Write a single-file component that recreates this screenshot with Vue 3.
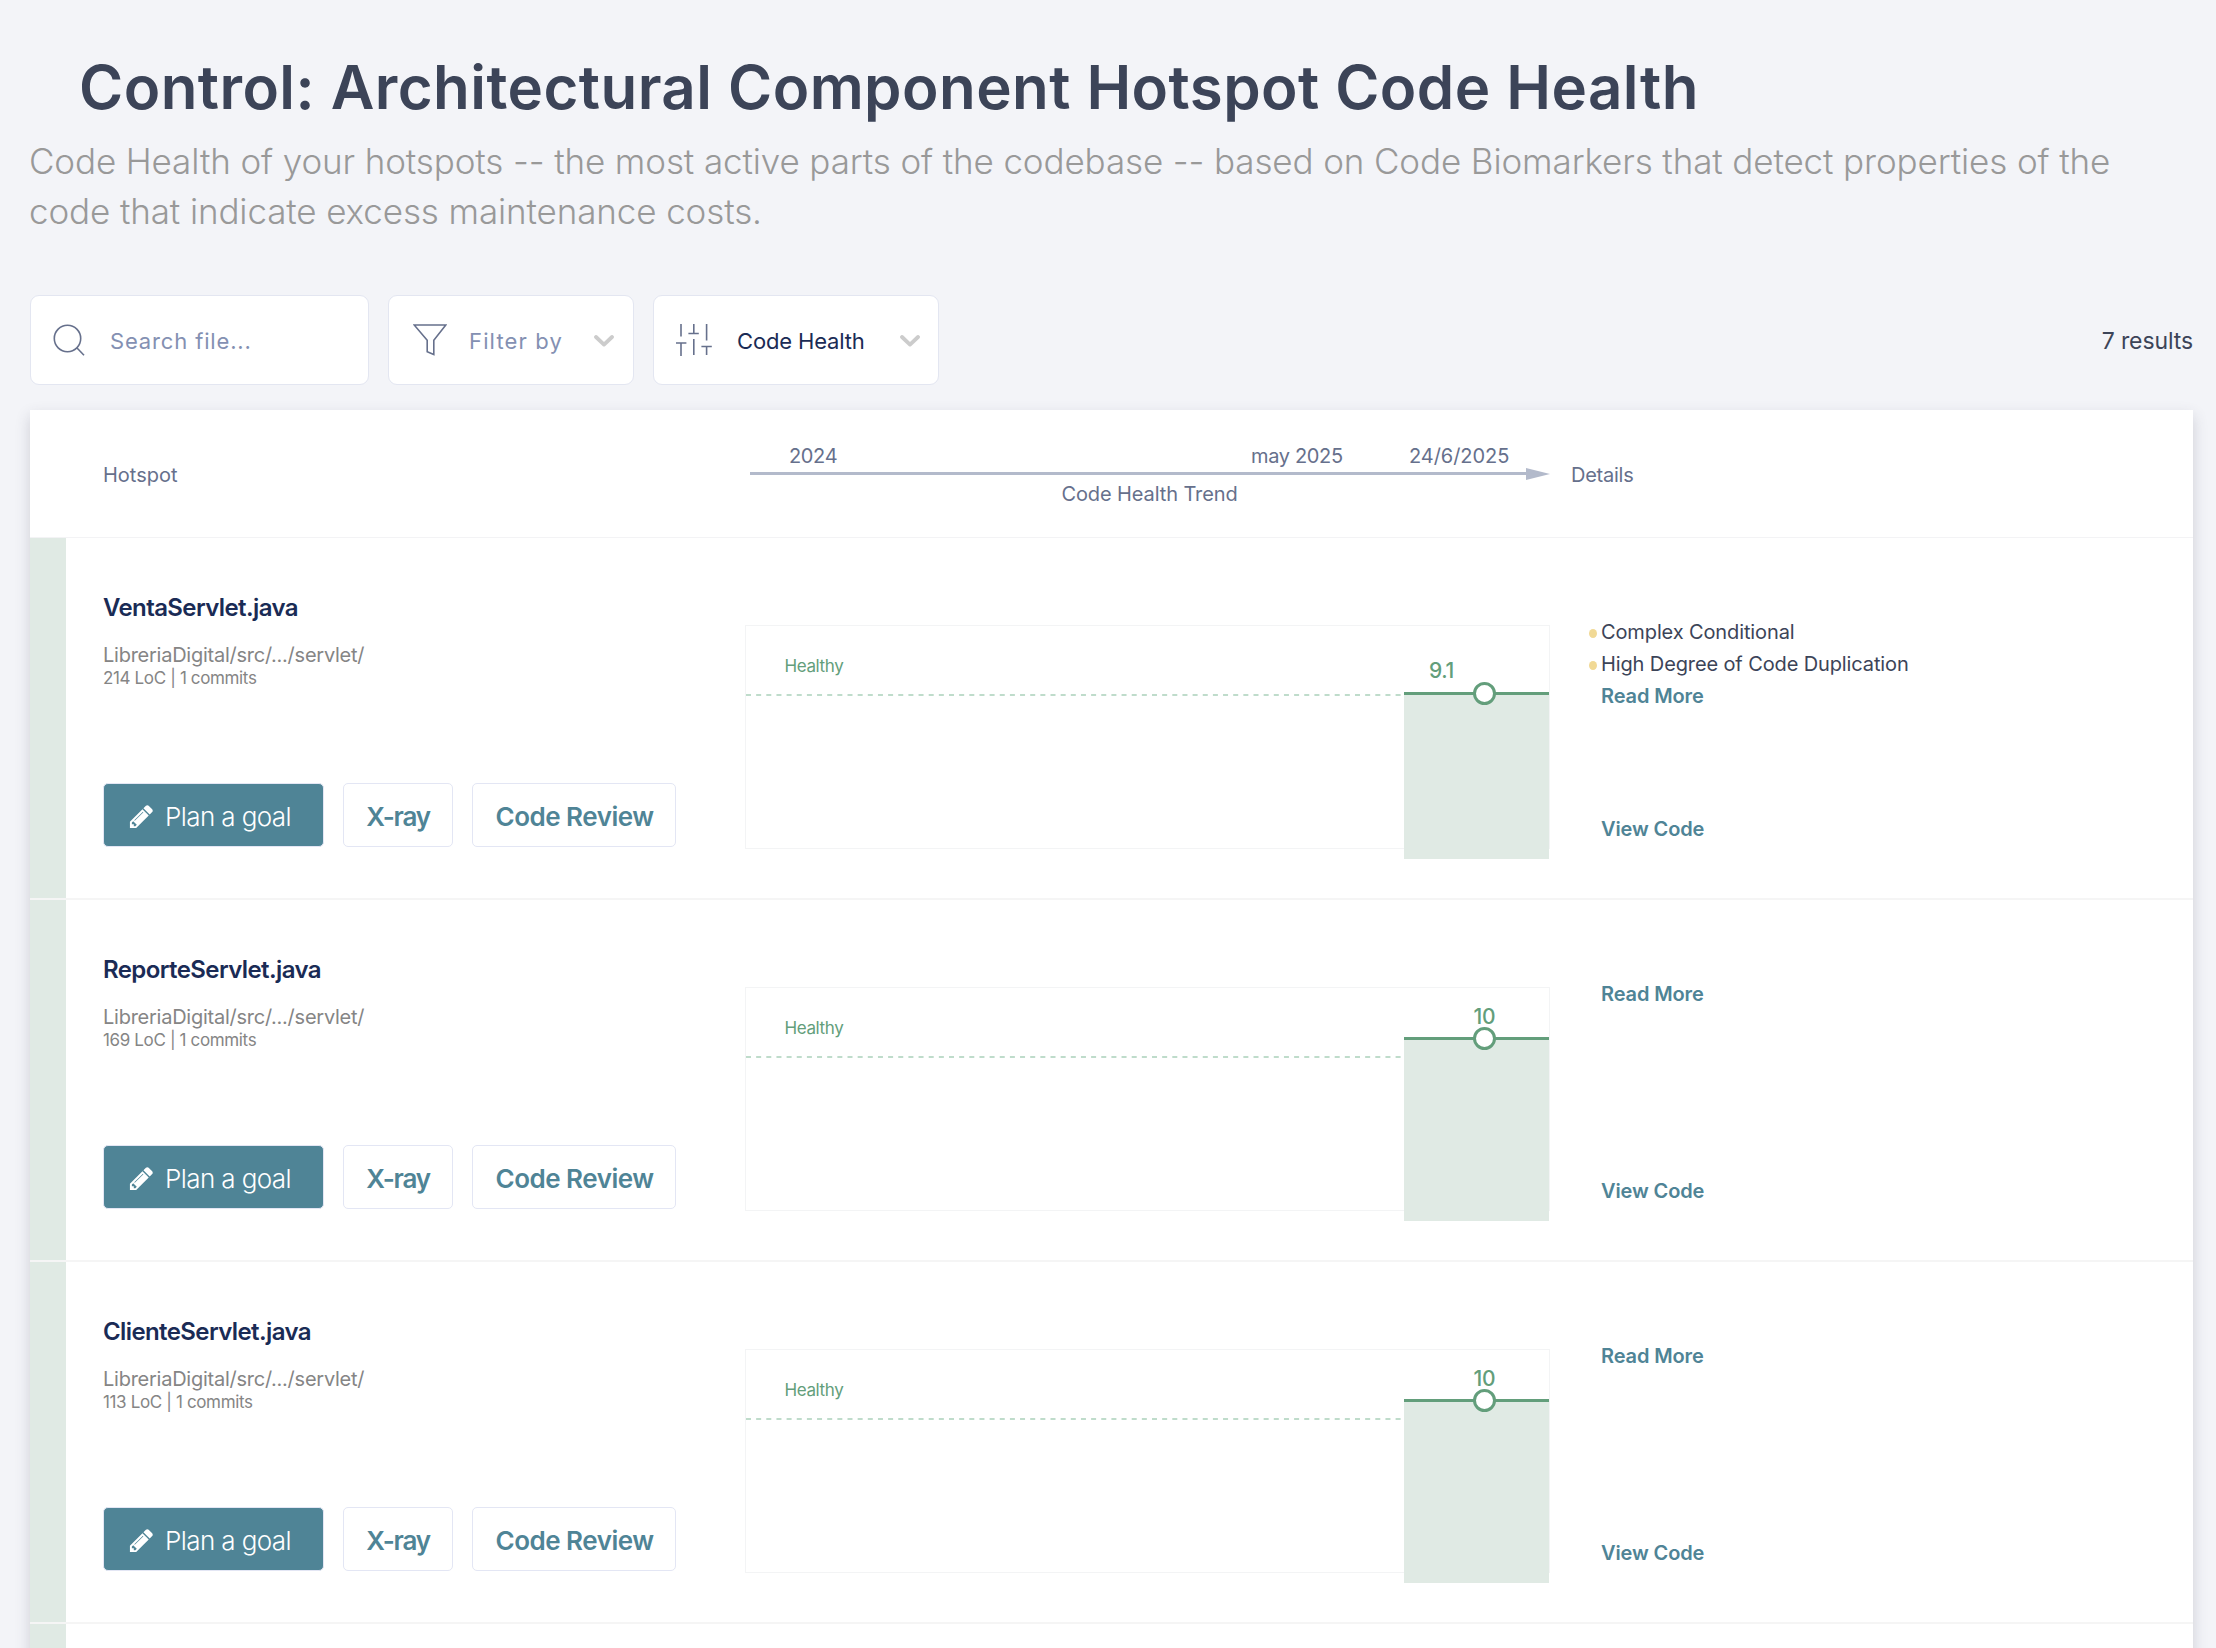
<script setup>
const files = [
  { name: 'VentaServlet.java', loc: 214, commits: 1, score: '9.1', lineY: 68.5, labelX: 684, labelY: 53, markers: ['Complex Conditional', 'High Degree of Code Duplication'] },
  { name: 'ReporteServlet.java', loc: 169, commits: 1, score: '10', lineY: 51.5, labelX: 728.5, labelY: 37, markers: [] },
  { name: 'ClienteServlet.java', loc: 113, commits: 1, score: '10', lineY: 51.5, labelX: 728.5, labelY: 37, markers: [] }
]
const path = 'LibreriaDigital/src/.../servlet/'
</script>

<template>
  <main class="page">
    <h1 class="title">Control: Architectural Component Hotspot Code Health</h1>
    <p class="subtitle">
      Code Health of your hotspots -- the most active parts of the codebase -- based on Code Biomarkers that detect properties of the
      code that indicate excess maintenance costs.
    </p>

    <div class="toolbar">
      <label class="control search">
        <svg class="icon" width="33" height="33" viewBox="0 0 33 33">
          <circle cx="14.5" cy="14.5" r="13.2" />
          <path d="M23.8 23.8 L31 31.2" />
        </svg>
        <span class="hint">Search file...</span>
      </label>
      <div class="control filter">
        <svg class="icon" width="34" height="33" viewBox="0 0 34 33">
          <path d="M1.2 1 H32.8 L20.8 16.2 V30.6 L14.2 27.8 V16.2 Z" />
        </svg>
        <span class="hint">Filter by</span>
        <svg class="chevron" width="20" height="12" viewBox="0 0 20 12"><path d="M2 2 L10 9.6 L18 2" /></svg>
      </div>
      <div class="control sort">
        <svg class="icon" width="36" height="32" viewBox="0 0 36 32">
          <path d="M5 0 V12.5 M0 19 H10.4 M5 19 V32 M17.8 0 V9.5 M12.4 9.5 H22.8 M17.8 15 V31 M30.6 0 V16.5 M25.4 22.5 H35.8 M30.6 22.5 V31" />
        </svg>
        <span class="value">Code Health</span>
        <svg class="chevron" width="20" height="12" viewBox="0 0 20 12"><path d="M2 2 L10 9.6 L18 2" /></svg>
      </div>
      <span class="results">7 results</span>
    </div>

    <section class="card">
      <header class="head">
        <span class="head-file">Hotspot</span>
        <div class="timeline">
          <div class="dates"><span>2024</span><span>may 2025</span><span>24/6/2025</span></div>
          <svg class="arrow" width="800" height="13" viewBox="0 0 800 13">
            <rect x="0" y="4" width="777" height="3" />
            <path d="M776 0 L800 6 L776 12 Z" />
          </svg>
          <div class="caption">Code Health Trend</div>
        </div>
        <span class="head-details">Details</span>
      </header>

      <article v-for="f in files" :key="f.name" class="row">
        <div class="strip"></div>
        <div class="file">
          <h2 class="name">{{ f.name }}</h2>
          <div class="path">{{ path }}</div>
          <div class="meta">{{ f.loc }} LoC | {{ f.commits }} commits</div>
          <div class="actions">
            <button class="btn primary">
              <svg width="27" height="27" viewBox="0 0 1792 1792">
                <path d="M491 1536l91-91-235-235-91 91v107h128v128h107zm523-928q0-22-22-22-10 0-17 7l-542 542q-7 7-7 17 0 22 22 22 10 0 17-7l542-542q7-7 7-17zm-54-192l416 416-832 832h-416v-416zm683 96q0 53-37 90l-166 166-416-416 166-165q36-38 90-38 53 0 91 38l235 234q37 39 37 91z" />
              </svg>
              <span>Plan a goal</span>
            </button>
            <button class="btn xray">X-ray</button>
            <button class="btn review">Code Review</button>
          </div>
        </div>
        <svg class="chart" width="806" height="236" viewBox="0 0 806 236">
          <rect class="frame" x="0.5" y="0.5" width="804" height="223" />
          <path class="threshold" d="M1 70 H658" />
          <text class="zone" x="39.5" y="47">Healthy</text>
          <rect class="area" x="659" y="0" width="145" height="234" :style="{ y: f.lineY + 'px', height: 234 - f.lineY + 'px' }" />
          <path class="line" :d="`M659 ${f.lineY} H804`" />
          <circle class="point" cx="739.5" :cy="f.lineY" r="10" />
          <text class="score" :x="f.labelX" :y="f.labelY">{{ f.score }}</text>
        </svg>
        <div class="details">
          <ul class="notes">
            <li v-for="m in f.markers" :key="m"><i class="dot"></i>{{ m }}</li>
            <li><a>Read More</a></li>
          </ul>
          <a>View Code</a>
        </div>
      </article>
      <div class="row next"><div class="strip"></div></div>
    </section>
  </main>
</template>

<style>
body { background: #f3f4f8; }
</style>

<style scoped>
.page {
  box-sizing: border-box;
  height: 1648px;
  overflow: hidden;
  padding: 51px 23px 0 30px;
  font-family: Inter, "Liberation Sans", sans-serif;
  color: #3c4458;
}
.title {
  margin: 0 0 13px 49px;
  font-size: 60px;
  line-height: 72px;
  font-weight: 600;
  letter-spacing: 0.45px;
}
.subtitle {
  margin: 0 0 0 -1px;
  width: 2120px;
  font-size: 35px;
  line-height: 50px;
  font-weight: 300;
  letter-spacing: -0.12px;
  color: #999;
}
.toolbar { display: flex; align-items: center; gap: 19px; margin-top: 59px; }
.control {
  box-sizing: border-box;
  display: flex;
  align-items: center;
  height: 90px;
  border: 1px solid #e3e6f1;
  border-radius: 9px;
  background: #fff;
  font-size: 22px;
}
.search { width: 339px; padding-left: 22px; }
.filter { width: 246px; padding: 0 19px 0 24px; }
.sort { width: 286px; padding: 0 18px 0 22px; }
.icon { flex: none; fill: none; stroke: #66708c; stroke-width: 1.6; }
.hint { color: #8490b2; letter-spacing: 0.85px; margin-top: 1px; }
.search .hint { margin-left: 24px; }
.filter .hint { margin-left: 22px; letter-spacing: 1.15px; }
.value { color: #1a2b55; margin: 1px 0 0 25px; letter-spacing: -0.15px; }
.chevron { flex: none; margin-left: auto; margin-top: 2px; fill: none; stroke: #ccc; stroke-width: 3.8; stroke-linecap: round; stroke-linejoin: round; }
.results { margin-left: auto; margin-top: 2px; font-size: 23px; letter-spacing: -0.1px; }

.card {
  margin-top: 25px;
  background: #fff;
  box-shadow: 0 6px 14px rgba(60, 60, 80, 0.2);
}
.head {
  box-sizing: border-box;
  display: grid;
  grid-template-columns: 715px 805px 1fr;
  height: 128px;
  border-bottom: 1px solid #f3f3f5;
  font-size: 20px;
  line-height: 24px;
  color: #66708c;
  letter-spacing: -0.1px;
}
.head-file { padding: 53px 0 0 73px; letter-spacing: 0; }
.head-details { padding: 53px 0 0 21px; letter-spacing: -0.25px; }
.timeline { padding-top: 34px; }
.dates { display: grid; grid-template-columns: 462px 158px auto; padding-left: 44px; letter-spacing: -0.35px; }
.dates span:last-child { letter-spacing: -0.05px; }
.arrow { display: block; margin-left: 5px; fill: #b3bacb; }
.caption { margin-top: 1px; text-align: center; padding-left: 4px; }

.row {
  display: grid;
  grid-template-columns: 36px 679px 806px 1fr;
  height: 360px;
  border-bottom: 2px solid #f5f5f5;
}
.strip { background: #e0eae4; }
.file { padding: 54px 0 0 37px; }
.name { margin: 0 0 19px; font-size: 24px; line-height: 32px; font-weight: 600; letter-spacing: -0.6px; color: #1a2b55; }
.path { font-size: 20px; line-height: 24px; letter-spacing: -0.25px; color: #858585; }
.meta { font-size: 17px; line-height: 22px; letter-spacing: -0.36px; color: #858585; }
.actions { display: flex; gap: 19px; margin-top: 94px; }
.btn {
  box-sizing: border-box;
  display: flex;
  align-items: center;
  justify-content: center;
  height: 64px;
  padding: 2px 0 0;
  border: 1px solid #e3e6f4;
  border-radius: 5px;
  background: #fff;
  color: #4f8496;
  font-family: inherit;
  font-size: 26px;
  font-weight: 600;
}
.primary { width: 221px; justify-content: flex-start; padding-left: 24px; background: #4f8496; color: #fff; font-weight: 300; letter-spacing: -0.6px; }
.primary svg { margin: 0 10px 0 0; fill: #fff; }
.xray { width: 110px; letter-spacing: -1.2px; }
.review { width: 204px; letter-spacing: -0.5px; padding-left: 1px; }

.chart { margin-top: 87px; }
.frame { fill: none; stroke: #f3f4f5; }
.threshold { fill: none; stroke: #bfdccb; stroke-width: 2; stroke-dasharray: 5 5.15; }
.zone { font-size: 17px; letter-spacing: -0.38px; fill: #639e7b; }
.area { fill: #e0eae4; }
.line { fill: none; stroke: #639e7b; stroke-width: 3.2; }
.point { fill: #fff; stroke: #639e7b; stroke-width: 3; }
.score { font-size: 21px; font-weight: 500; letter-spacing: -0.3px; fill: #639e7b; }

.details {
  display: flex;
  flex-direction: column;
  justify-content: space-between;
  box-sizing: border-box;
  height: 229px;
  margin-top: 78px;
  padding-left: 50px;
  font-size: 20px;
  line-height: 32px;
  letter-spacing: -0.12px;
}
.notes { margin: 0; padding: 0; list-style: none; }
.notes li { position: relative; }
.dot { position: absolute; left: -12px; top: 13px; width: 8px; height: 9px; border-radius: 50%; background: #f1d995; }
.details a { color: #4f8496; font-weight: 600; }
.next { height: 60px; border: 0; }
</style>
